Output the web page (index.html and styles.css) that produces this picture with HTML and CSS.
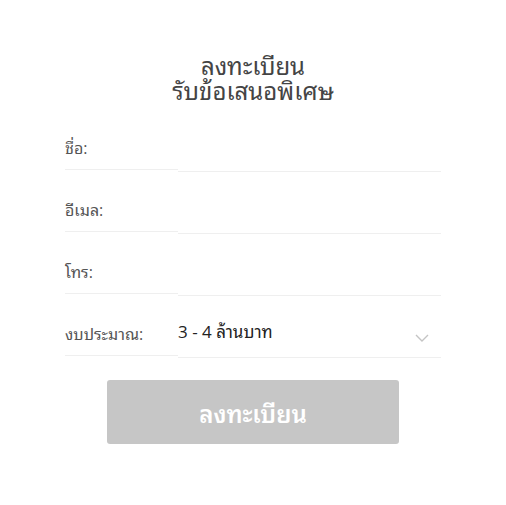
FILE: index.html
```html
<!DOCTYPE html>
<html lang="th">
<head>
  <meta charset="UTF-8">
  <meta name="viewport" content="width=device-width, initial-scale=1.0">
  <title>ลงทะเบียน</title>
  <link rel="stylesheet" href="styles.css">
</head>
<body>
  <div class="form-container">
    <h1>ลงทะเบียน<br>รับข้อเสนอพิเศษ</h1>
    <form class="reg-form">
      <div class="row">
        <label class="row-label">ชื่อ:</label>
        <div class="row-field"><input type="text"></div>
      </div>
      <div class="row">
        <label class="row-label">อีเมล:</label>
        <div class="row-field"><input type="email"></div>
      </div>
      <div class="row">
        <label class="row-label">โทร:</label>
        <div class="row-field"><input type="tel"></div>
      </div>
      <div class="row">
        <label class="row-label">งบประมาณ:</label>
        <div class="row-field select-field">
          <span class="select-value">3 - 4 ล้านบาท</span>
          <svg class="chevron" width="14" height="8" viewBox="0 0 14 8"><path d="M1 1l6 6 6-6" fill="none" stroke="#c4c4c4" stroke-width="1.4"/></svg>
        </div>
      </div>
      <button type="button" class="submit">ลงทะเบียน</button>
    </form>
  </div>
</body>
</html>
```

FILE: styles.css
```css
body {
  font-family: "Open Sans", "Noto Sans Thai Looped", sans-serif;
  background: #fff;
  margin: 0;
  padding: 0;
}

.form-container {
  width: 376px;
  margin: 0 auto;
  padding-top: 53px;
}

h1 {
  text-align: center;
  font-size: 24px;
  font-weight: normal;
  line-height: 25px;
  color: #444;
  margin: 0 0 7px;
}

.row {
  display: flex;
  align-items: flex-start;
  height: 62px;
}

.row-label {
  width: 113px;
  height: 49px;
  padding-bottom: 10px;
  border-bottom: 1px solid #efefef;
  display: flex;
  align-items: flex-end;
  font-size: 16px;
  color: #555;
  line-height: 22px;
}

.row-field {
  flex: 1;
  height: 61px;
  border-bottom: 1px solid #efefef;
}

.row-field input {
  width: 100%;
  height: 100%;
  border: none;
  outline: none;
  font-size: 16px;
  background: transparent;
}

.select-field {
  display: flex;
  align-items: flex-end;
  justify-content: space-between;
  box-sizing: border-box;
  height: 62px;
  padding: 0 12px 14px 0;
}

.select-value {
  font-size: 17px;
  color: #222;
  line-height: 22px;
}

.chevron {
  margin-bottom: 1px;
}

.submit {
  display: block;
  margin: 22px auto 0;
  width: 292px;
  height: 64px;
  background-color: #c6c6c6;
  color: #fff;
  border: none;
  border-radius: 3px;
  font-family: inherit;
  font-size: 24px;
  font-weight: 600;
}
```
